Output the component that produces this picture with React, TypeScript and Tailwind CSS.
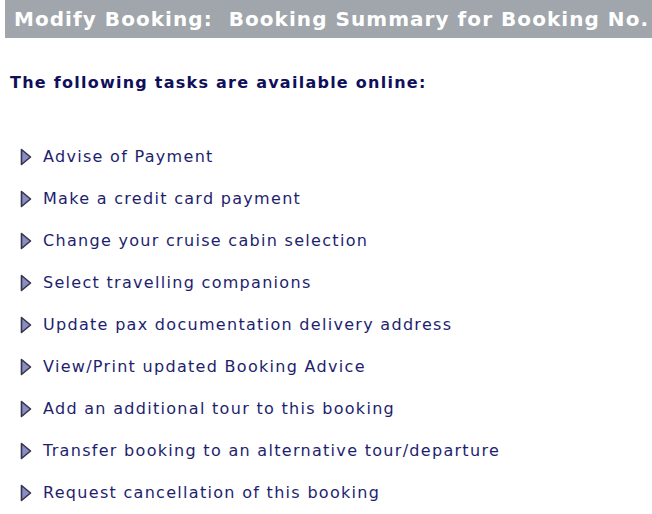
const TASKS = [
  'Advise of Payment',
  'Make a credit card payment',
  'Change your cruise cabin selection',
  'Select travelling companions',
  'Update pax documentation delivery address',
  'View/Print updated Booking Advice',
  'Add an additional tour to this booking',
  'Transfer booking to an alternative tour/departure',
  'Request cancellation of this booking',
];

function Arrow() {
  return (
    <svg width="12" height="18" viewBox="0 0 12 18" className="shrink-0">
      <path d="M1.5 1.5 L10.5 9 L1.5 16.5 Z" fill="#8a8cc4" stroke="#34344a" strokeWidth="1.6" strokeLinejoin="round" />
    </svg>
  );
}

export default function App() {
  return (
    <div className="w-[652px] h-[514px] bg-white overflow-hidden" style={{ fontFamily: 'Verdana, "DejaVu Sans", sans-serif' }}>
      <div className="ml-[5px] h-[38px] bg-[#a0a6ab] flex items-center pl-[9px] whitespace-nowrap">
        <span className="text-white font-bold text-[20px] tracking-[1.05px]">Modify Booking:&nbsp; Booking Summary for Booking No.</span>
      </div>
      <p className="mt-[33px] ml-[10px] text-[#10105a] font-bold text-[16px] tracking-[1.25px]">The following tasks are available online:</p>
      <ul className="mt-[51px] ml-[20px] flex flex-col gap-[20px]">
        {TASKS.map(t => (
          <li key={t} className="flex items-center gap-[11px] h-[22px]">
            <Arrow />
            <a className="text-[#1e1e6e] text-[16px] tracking-[1.3px]">{t}</a>
          </li>
        ))}
      </ul>
    </div>
  );
}
